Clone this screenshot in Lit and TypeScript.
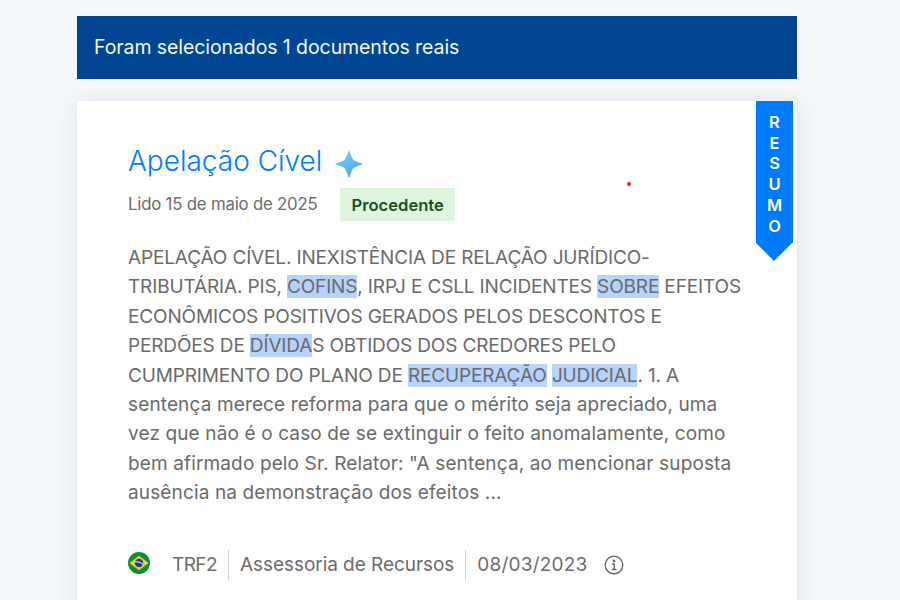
import { LitElement, html, css } from "lit";
import { customElement } from "lit/decorators.js";

@customElement("app-root")
export class AppRoot extends LitElement {
  static styles = css`
    :host { display: block; height: 600px; overflow: hidden; background: #f4f7fb; font-family: Inter, "Noto Sans", sans-serif; position: relative; }
    .wrap { padding: 16px 0 0 77px; width: 720px; display: flex; flex-direction: column; gap: 22px; }
    .banner { height: 63px; padding-bottom: 2px; box-sizing: border-box; background: #004693; color: #f4f8fc; display: flex; align-items: center; padding-left: 17px; font-size: 19.5px; letter-spacing: -0.085px; }
    .card { position: relative; width: 720px; height: 560px; box-sizing: border-box; background: #fff; padding: 42px 51px 0; box-shadow: 0 2px 20px rgba(60,80,110,.12); }
    .title { display: flex; align-items: center; height: 36px; color: #007bff; font-size: 28px; font-weight: 300; gap: 12px; }
    .title svg { margin-top: 6px; }
    .meta { display: flex; align-items: center; margin-top: 9px; height: 33px; color: #6c6c6c; font-size: 16.8px; letter-spacing: -.2px; }
    .meta > span:first-child { margin-top: -2px; }
    .pill { margin-left: 22px; height: 33px; padding: 0 11px 0 12px; display: flex; align-items: center; background: #def5de; color: #1d4d26; font-weight: 600; font-size: 16.6px; letter-spacing: 0; }
    .body { margin-top: 22px; color: #6a6a6a; font-size: 19px; line-height: 29.4px; white-space: nowrap; }
    .up { display: block; letter-spacing: -.145px; }
    .lo { display: block; letter-spacing: .135px; }
    mark { background: #b5d3fb; color: inherit; }
    .foot { display: flex; align-items: center; margin-top: 42px; height: 30px; color: #6c6c6c; font-size: 19px; letter-spacing: -.05px; }
    .flag { margin: -4px 22px 0 0; display: block; }
    .cell { display: flex; align-items: center; height: 30px; padding-right: 11px; margin-right: 11px; border-right: 1px solid #cdd2d8; }
    .trf { letter-spacing: -.6px; }
    .date { letter-spacing: .2px; }
    .info { margin-left: 17px; }
    .tab { position: absolute; top: 0; right: 4px; width: 37px; height: 142px; background: #007bff; color: #fff; display: flex; flex-direction: column; align-items: center; padding-top: 11px; box-sizing: border-box; font-size: 16.5px; font-weight: 600; line-height: 20.7px; }
    .tab::after { content: ""; position: absolute; left: 0; top: 142px; border-left: 18.5px solid transparent; border-right: 18.5px solid transparent; border-top: 18px solid #007bff; }
    .dot { position: absolute; left: 550px; top: 81px; width: 4px; height: 4px; border-radius: 50%; background: #f02020; }
  `;

  render() {
    return html`<div class="wrap">
      <div class="banner">Foram selecionados 1 documentos reais</div>
      <div class="card">
        <div class="title"><span>Apelação Cível</span>
          <svg width="30" height="30" viewBox="0 0 30 30">
            <defs><linearGradient id="g" x1="0" y1="0" x2="0.6" y2="1"><stop offset="0" stop-color="#7fd6fa"/><stop offset="1" stop-color="#4aa6ec"/></linearGradient></defs>
            <path d="M15 .8C16 3 18 10 19.500 11 21 12.500 26 13.700 29.200 15 26 16.300 21 17.500 19.500 19 18 20.500 16 27 15 29.200 14 27 12 20.500 10.500 19 9 17.500 4 16.300 .8 15 4 13.700 9 12.500 10.500 11 12 10 14 3 15 .8Z" fill="url(#g)"/>
          </svg>
        </div>
        <div class="meta"><span>Lido 15 de maio de 2025</span><span class="pill">Procedente</span></div>
        <div class="body"><span class="up">APELAÇÃO CÍVEL. INEXISTÊNCIA DE RELAÇÃO JURÍDICO-</span><span class="up">TRIBUTÁRIA. PIS, <mark>COFINS</mark>, IRPJ E CSLL INCIDENTES <mark>SOBRE</mark> EFEITOS</span><span class="up">ECONÔMICOS POSITIVOS GERADOS PELOS DESCONTOS E</span><span class="up">PERDÕES DE <mark>DÍVIDA</mark>S OBTIDOS DOS CREDORES PELO</span><span class="up">CUMPRIMENTO DO PLANO DE <mark>RECUPERAÇÃO</mark> <mark>JUDICIAL</mark>. 1. A</span><span class="lo">sentença merece reforma para que o mérito seja apreciado, uma</span><span class="lo">vez que não é o caso de se extinguir o feito anomalamente, como</span><span class="lo">bem afirmado pelo Sr. Relator: "A sentença, ao mencionar suposta</span><span class="lo">ausência na demonstração dos efeitos ...</span></div>
        <div class="foot">
          <svg class="flag" width="22" height="22" viewBox="0 0 22 22">
            <circle cx="11" cy="11" r="11" fill="#0b8f3c"/>
            <path d="M11 3.800 20.500 11 11 18.200 1.500 11Z" fill="#f7cf2a"/>
            <circle cx="11" cy="11" r="4.200" fill="#1c3f8f"/>
            <path d="M6.900 9.800C9.500 9.500 12.800 10.300 15 12.300" stroke="#fff" stroke-width="1" fill="none"/>
          </svg>
          <span class="cell trf">TRF2</span><span class="cell">Assessoria de Recursos</span><span class="date">08/03/2023</span>
          <svg class="info" width="20" height="20" viewBox="0 0 20 20" fill="none" stroke="#666" stroke-width="1.400">
            <circle cx="10" cy="10" r="8.800"/>
            <path d="M8.200 9H10.200V14.500M8 14.500H12.400"/><circle cx="10" cy="6" r=".7" fill="#666"/>
          </svg>
        </div>
        <div class="tab"><span>R</span><span>E</span><span>S</span><span>U</span><span>M</span><span>O</span></div>
        <div class="dot"></div>
      </div>
    </div>`;
  }
}
